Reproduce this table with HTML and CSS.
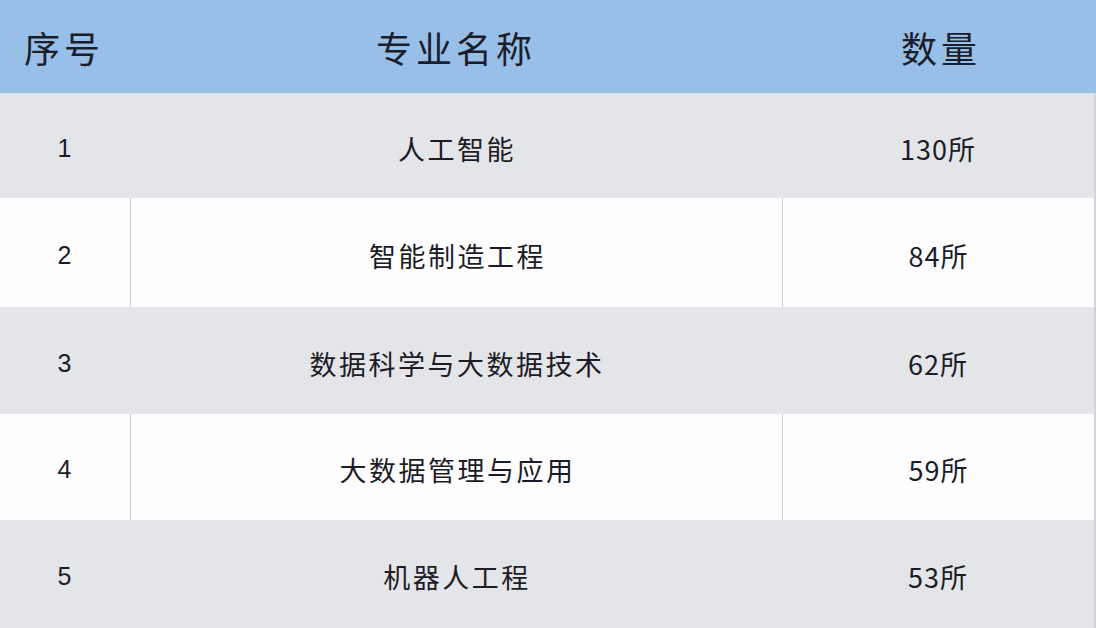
FILE: index.html
```html
<!DOCTYPE html>
<html lang="zh">
<head>
<meta charset="utf-8">
<title>专业表</title>
<link rel="stylesheet" href="styles.css">
</head>
<body>
<div class="table">
  <div class="row head">
    <div class="cell">序号</div>
    <div class="cell">专业名称</div>
    <div class="cell">数量</div>
  </div>
  <div class="row gray">
    <div class="cell num">1</div>
    <div class="cell name">人工智能</div>
    <div class="cell">130所</div>
  </div>
  <div class="row white">
    <div class="cell num">2</div>
    <div class="cell name">智能制造工程</div>
    <div class="cell">84所</div>
  </div>
  <div class="row gray">
    <div class="cell num">3</div>
    <div class="cell name">数据科学与大数据技术</div>
    <div class="cell">62所</div>
  </div>
  <div class="row white">
    <div class="cell num">4</div>
    <div class="cell name">大数据管理与应用</div>
    <div class="cell">59所</div>
  </div>
  <div class="row gray">
    <div class="cell num">5</div>
    <div class="cell name">机器人工程</div>
    <div class="cell">53所</div>
  </div>
</div>
</body>
</html>
```
FILE: styles.css
```css
html, body {
  margin: 0;
  padding: 0;
  background: #e4e5e8;
}
body {
  width: 1096px;
  height: 628px;
  overflow: hidden;
  font-family: "Noto Sans CJK SC", "Noto Sans", sans-serif;
  color: #1c1c26;
}
.table {
  display: grid;
  grid-template-rows: 93px 105px 109px 107px 106px 108px;
}
.row {
  display: grid;
  grid-template-columns: 130px 652px 312px 2px;
}
.row::after {
  content: "";
  background: #d2d3d6;
}
.cell {
  display: flex;
  align-items: center;
  justify-content: center;
  font-size: 27px;
  letter-spacing: 1px;
  padding-top: 5px;
}
.name {
  letter-spacing: 2.5px;
  padding-left: 2px;
}
.head {
  background: #97bfe8;
}
.head::after {
  background: #97bfe8;
}
.head .cell {
  font-size: 36px;
  letter-spacing: 4px;
  color: #1a1d2a;
  padding-top: 0;
}
.head .cell:first-child {
  justify-content: flex-start;
  padding-left: 24px;
}
.head .cell:nth-child(3) {
  padding-left: 6px;
}
.gray {
  background: #e4e5e8;
}
.white {
  background: #fdfdfe;
}
.white .cell + .cell {
  border-left: 1px solid #cfd0d3;
}
.num {
  font-family: "Liberation Sans", "Noto Sans", sans-serif;
  font-size: 25px;
  padding-right: 0;
}
```
